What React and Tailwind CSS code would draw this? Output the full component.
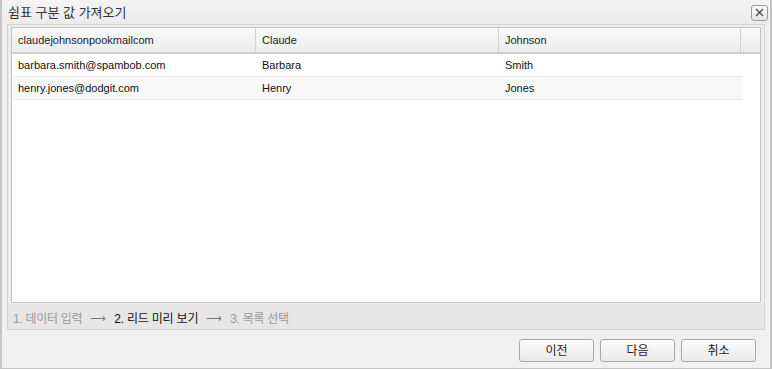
const font = { fontFamily: '"Liberation Sans", "Noto Sans CJK KR", sans-serif' };

const columns = [
  { label: 'claudejohnsonpookmailcom', width: 'w-[244px]' },
  { label: 'Claude', width: 'w-[243px]' },
  { label: 'Johnson', width: 'w-[242px]' },
];

const rows = [
  ['barbara.smith@spambob.com', 'Barbara', 'Smith'],
  ['henry.jones@dodgit.com', 'Henry', 'Jones'],
];

function CloseButton() {
  return (
    <button className="flex h-[16px] w-[17px] items-center justify-center rounded-[3px] border border-[#9a9a9a] bg-gradient-to-b from-[#fdfdfd] to-[#e4e4e4]">
      <svg width="9" height="9" viewBox="0 0 9 9">
        <path d="M1 1 L8 8 M8 1 L1 8" stroke="#444" strokeWidth="1.2" />
      </svg>
    </button>
  );
}

function Btn({ children }) {
  return (
    <button className="h-[23px] w-[75px] rounded-[3px] border border-[#a8a8a8] bg-gradient-to-b from-[#fcfcfc] to-[#e9e9e9] text-[12px] text-[#222]">
      {children}
    </button>
  );
}

export default function App() {
  return (
    <div className="flex h-[369px] w-[772px] flex-col border-x-2 border-b border-[#c6c6c6] bg-[#f0f0f0]" style={font}>
      <div className="flex h-[24px] shrink-0 items-center justify-between bg-gradient-to-b from-[#f4f4f4] to-[#ebebeb] pl-[6px] pr-[2px] pt-px">
        <span className="text-[13px] text-[#333]">쉼표 구분 값 가져오기</span>
        <CloseButton />
      </div>

      <div className="mx-[5px] flex h-[306px] shrink-0 flex-col border border-[#d2d2d2] bg-[#ededed]">
        <div className="mx-[3px] mt-[2px] flex-1 border border-[#c2c2c2] bg-white">
          <div className="flex h-[26px] border-b-2 border-[#cfcfcf] bg-gradient-to-b from-[#fafafa] to-[#ececec] text-[11px] text-[#222]">
            {columns.map((c) => (
              <div key={c.label} className={`${c.width} flex items-center border-r border-[#d4d4d4] pl-[6px] pt-px`}>
                {c.label}
              </div>
            ))}
            <div className="flex-1" />
          </div>
          {rows.map((r, i) => (
            <div
              key={r[0]}
              className={`flex h-[23px] w-[730px] border-b border-[#ececec] text-[11px] text-[#111] ${i % 2 ? 'bg-[#f9f9f9]' : 'bg-white'}`}
            >
              {r.map((cell, j) => (
                <div key={j} className={`${columns[j].width} flex items-center pl-[6px] pt-px`}>
                  {cell}
                </div>
              ))}
            </div>
          ))}
        </div>
        <div className="mt-px flex h-[25px] shrink-0 items-center gap-[8px] bg-[#e6e6e6] pl-[5px] pt-[4px] text-[12px] text-[#9a9a9a]">
          <span className="tracking-[-0.3px]">1. 데이터 입력</span>
          <span className="text-[11px] text-[#777]">⟶</span>
          <span className="tracking-[-0.2px] text-[#111]">2. 리드 미리 보기</span>
          <span className="text-[11px] text-[#777]">⟶</span>
          <span className="tracking-[-0.3px]">3. 목록 선택</span>
        </div>
      </div>

      <div className="flex justify-end gap-[6px] pr-[14px] pt-[9px]">
        <Btn>이전</Btn>
        <Btn>다음</Btn>
        <Btn>취소</Btn>
      </div>
    </div>
  );
}
